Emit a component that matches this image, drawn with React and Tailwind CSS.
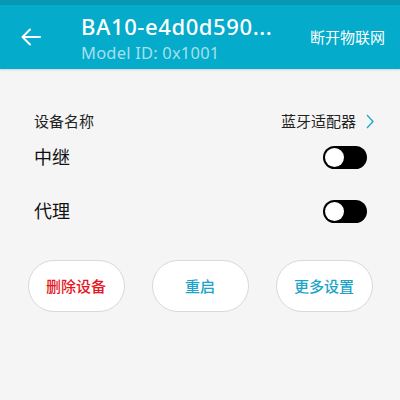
import React from "react";

const font = { fontFamily: '"Noto Sans", "Noto Sans CJK SC", sans-serif' };

function Toggle() {
  return (
    <div className="w-[44px] h-[23px] rounded-full bg-black flex items-center px-[2px]">
      <div className="w-[19px] h-[19px] rounded-full bg-white" />
    </div>
  );
}

export default function App() {
  return (
    <div className="w-[400px] h-[400px] bg-[#f5f5f5] overflow-hidden" style={font}>
      <div className="h-[5px] bg-[#0898b4]" />
      <div className="h-[64px] bg-[#05abcb] flex items-center shadow-[0_1px_2px_rgba(0,0,0,0.15)] relative">
        <div className="w-[81px] flex items-center pl-[21px]">
          <svg width="20" height="18" viewBox="0 0 20 18" fill="none" stroke="white" strokeWidth="2" strokeLinecap="round" strokeLinejoin="round">
            <path d="M19 9H2" />
            <path d="M9 1.5L1.5 9L9 16.5" />
          </svg>
        </div>
        <div className="flex-1 flex flex-col justify-center pt-[3px]">
          <div className="text-white text-[22px] leading-[24px] font-medium tracking-[0.6px]">BA10-e4d0d590...</div>
          <div className="text-[#a4e0ed] text-[16.5px] leading-[20px] mt-[5px] tracking-[0.2px]">Model ID: 0x1001</div>
        </div>
        <div className="text-white text-[15px] pr-[15px]">断开物联网</div>
      </div>
      <div className="px-[34px]">
        <div className="mt-[34px] h-[36px] flex items-center justify-between">
          <span className="text-[15px] text-[#222]">设备名称</span>
          <div className="flex items-center gap-[10px] -mr-[8px]">
            <span className="text-[15px] text-[#222]">蓝牙适配器</span>
            <svg width="8" height="15" viewBox="0 0 8 15" fill="none" stroke="#1aa6c9" strokeWidth="1.3">
              <path d="M1 1L7 7.5L1 14" />
            </svg>
          </div>
        </div>
        <div className="h-[36px] flex items-center justify-between">
          <span className="text-[18px] text-[#111]">中继</span>
          <div className="-mr-[1px]"><Toggle /></div>
        </div>
        <div className="mt-[18px] h-[36px] flex items-center justify-between">
          <span className="text-[18px] text-[#111]">代理</span>
          <div className="-mr-[1px]"><Toggle /></div>
        </div>
      </div>
      <div className="mt-[31px] flex justify-center gap-[27px]">
        <button className="w-[97px] h-[52px] rounded-full bg-white border border-[#d9d9d9] text-[15px] font-medium text-[#e5161d]">删除设备</button>
        <button className="w-[97px] h-[52px] rounded-full bg-white border border-[#d9d9d9] text-[15px] font-medium text-[#1ba4c8]">重启</button>
        <button className="w-[97px] h-[52px] rounded-full bg-white border border-[#d9d9d9] text-[15px] font-medium text-[#1ba4c8]">更多设置</button>
      </div>
    </div>
  );
}
